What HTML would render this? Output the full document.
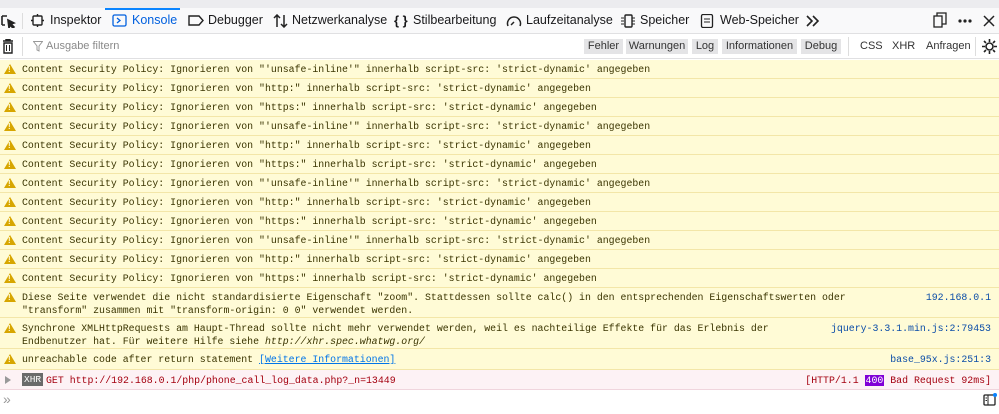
<!DOCTYPE html>
<html><head><meta charset="utf-8"><style>
*{box-sizing:border-box;margin:0;padding:0}
body{width:999px;height:414px;overflow:hidden;background:#fff;font-family:"Liberation Sans",sans-serif;position:relative}
.top{position:absolute;left:0;top:0;width:999px;height:8px;background:#ececef}
.tabs{position:absolute;left:0;top:8px;width:999px;height:26px;background:#f9f9fa;border-bottom:1px solid #e0e0e2;font-size:12.5px;color:#18181a}
.tab{position:absolute;top:0;height:25px;line-height:25px;white-space:nowrap}
.tab svg{position:absolute;left:0;top:6px}
.tab span{position:absolute;top:0}
.sel{color:#0060df}
.selbar{position:absolute;left:105px;top:0;width:75px;height:2px;background:#0a84ff}
.filter{position:absolute;left:0;top:34px;width:999px;height:25px;background:#fff;border-bottom:1px solid #e0e0e2;font-size:11px}
.btn{position:absolute;top:5px;height:15px;line-height:15px;text-align:center;background:#e4e4e6;color:#333;font-size:11px}
.plain{position:absolute;top:5px;line-height:15px;color:#333;font-size:11px}
.msg{position:absolute;left:0;width:999px;background:#fffbd6;border-bottom:1px solid #f3e6a8;font-family:"Liberation Mono",monospace;font-size:9.9px;color:#3a3400;line-height:13px}
.msg .t{position:absolute;left:22px;white-space:pre}
.msg .w{position:absolute;left:4px;width:0;height:0;border-left:6px solid transparent;border-right:6px solid transparent;border-bottom:10px solid #d7a600}
.msg .w:after{content:"!";position:absolute;left:-2px;top:1px;font:bold 8px "Liberation Sans";color:#fffbd6}
.src{position:absolute;right:8px;color:#0b4da8;white-space:pre}
a{color:#0074e8;text-decoration:underline}
</style></head><body>
<div class="top"></div>
<div class="tabs">
<div class="selbar"></div>
<div class="tab" style="left:0"><svg width="16" height="14"><path d="M2 2h5M2 2v9M2 11h3M8 6l6 3-3 1 3 3-1 1-3-3-1 3z" stroke="#222" fill="#222" stroke-width="1.6"/></svg></div>
<div style="position:absolute;left:22px;top:5px;width:1px;height:16px;background:#ddd"></div>
<div class="tab" style="left:30px"><svg width="15" height="14"><rect x="3" y="2" width="9" height="9" rx="1" fill="none" stroke="#222" stroke-width="1.4"/><path d="M1 6.5h2M12 6.5h2M7.5 0v2M7.5 11v2" stroke="#222" stroke-width="1.4"/></svg><span style="left:20px">Inspektor</span></div>
<div class="tab sel" style="left:112px"><svg width="15" height="14"><rect x="1" y="1" width="13" height="11" rx="1.5" fill="none" stroke="#0060df" stroke-width="1.3"/><path d="M5 4l3 2.5-3 2.5" fill="none" stroke="#0060df" stroke-width="1.3"/></svg><span style="left:20px">Konsole</span></div>
<div class="tab" style="left:188px"><svg width="16" height="14"><path d="M1 2h10l4 4.5-4 4.5H1z" fill="none" stroke="#222" stroke-width="1.4"/></svg><span style="left:20px">Debugger</span></div>
<div class="tab" style="left:273px"><svg width="16" height="14"><path d="M4 13V1M1 4l3-3 3 3M11 1v12M8 10l3 3 3-3" fill="none" stroke="#222" stroke-width="1.5"/></svg><span style="left:19px">Netzwerkanalyse</span></div>
<div class="tab" style="left:394px"><span style="left:0;font-weight:bold;font-size:13px">{ }</span><span style="left:19px">Stilbearbeitung</span></div>
<div class="tab" style="left:506px"><svg width="16" height="14"><path d="M2 12A6.5 6.5 0 1 1 14 12" fill="none" stroke="#222" stroke-width="1.5"/><path d="M5 11l3-3" stroke="#222" stroke-width="1.5"/></svg><span style="left:20px">Laufzeitanalyse</span></div>
<div class="tab" style="left:620px"><svg width="16" height="14"><rect x="5" y="1" width="7" height="12" rx="1" fill="none" stroke="#222" stroke-width="1.4"/><path d="M1 4h3M1 7h3M1 10h3M12 4h3M12 7h3M12 10h3" stroke="#222"/></svg><span style="left:20px">Speicher</span></div>
<div class="tab" style="left:700px"><svg width="14" height="14"><rect x="1.5" y="0.5" width="11" height="13" rx="1.5" fill="none" stroke="#222" stroke-width="1.3"/><path d="M4 5h6M4 8h6" stroke="#222"/></svg><span style="left:20px">Web-Speicher</span></div>
<div class="tab" style="left:805px"><svg width="16" height="14"><path d="M2 2l5 5-5 5M8 2l5 5-5 5" fill="none" stroke="#222" stroke-width="1.6"/></svg></div>
<div class="tab" style="left:933px"><svg width="14" height="16" style="top:4px"><rect x="1" y="4" width="8" height="11" fill="none" stroke="#222" stroke-width="1.3"/><path d="M4 4V1h9v11H9" fill="none" stroke="#222" stroke-width="1.3"/></svg></div>
<div class="tab" style="left:957px"><svg width="16" height="14"><circle cx="3" cy="7" r="1.6" fill="#222"/><circle cx="8" cy="7" r="1.6" fill="#222"/><circle cx="13" cy="7" r="1.6" fill="#222"/></svg></div>
<div class="tab" style="left:982px"><svg width="14" height="14"><path d="M2 2l10 10M12 2L2 12" stroke="#222" stroke-width="1.5"/></svg></div>
</div>
<div class="filter">
<svg style="position:absolute;left:2px;top:5px" width="12" height="15"><path d="M1 2h10M4 2V0.5h4V2M2 4h8v10H2z" fill="none" stroke="#222" stroke-width="1.4"/><path d="M4.5 6v6M7.5 6v6" stroke="#222"/></svg>
<div style="position:absolute;left:22px;top:3px;width:1px;height:19px;background:#ddd"></div>
<svg style="position:absolute;left:33px;top:7px" width="10" height="11"><path d="M0.5 0.5h9L6 5v5L4 9V5z" fill="none" stroke="#999"/></svg>
<div style="position:absolute;left:46px;top:5px;line-height:15px;color:#8a8a8a">Ausgabe filtern</div>
<div class="btn" style="left:584px;width:39px">Fehler</div>
<div class="btn" style="left:626px;width:62px">Warnungen</div>
<div class="btn" style="left:692px;width:26px">Log</div>
<div class="btn" style="left:722px;width:75px">Informationen</div>
<div class="btn" style="left:801px;width:40px">Debug</div>
<div style="position:absolute;left:848px;top:3px;width:1px;height:19px;background:#ddd"></div>
<div class="plain" style="left:860px">CSS</div>
<div class="plain" style="left:892px">XHR</div>
<div class="plain" style="left:926px">Anfragen</div>
<div style="position:absolute;left:975px;top:3px;width:1px;height:19px;background:#ddd"></div>
<svg style="position:absolute;left:982px;top:5px" width="15" height="15"><circle cx="7.5" cy="7.5" r="3.5" fill="none" stroke="#222" stroke-width="1.6"/><path d="M7.5 0v3M7.5 12v3M0 7.5h3M12 7.5h3M2 2l2 2M11 11l2 2M13 2l-2 2M2 13l2-2" stroke="#222" stroke-width="1.6"/></svg>
</div>

<div class="msg" style="top:60px;height:19px"><div class="w" style="top:4px"></div><div class="t" style="top:3px">Content Security Policy: Ignorieren von "'unsafe-inline'" innerhalb script-src: 'strict-dynamic' angegeben</div></div>
<div class="msg" style="top:79px;height:19px"><div class="w" style="top:4px"></div><div class="t" style="top:3px">Content Security Policy: Ignorieren von "http:" innerhalb script-src: 'strict-dynamic' angegeben</div></div>
<div class="msg" style="top:98px;height:19px"><div class="w" style="top:4px"></div><div class="t" style="top:3px">Content Security Policy: Ignorieren von "https:" innerhalb script-src: 'strict-dynamic' angegeben</div></div>
<div class="msg" style="top:117px;height:19px"><div class="w" style="top:4px"></div><div class="t" style="top:3px">Content Security Policy: Ignorieren von "'unsafe-inline'" innerhalb script-src: 'strict-dynamic' angegeben</div></div>
<div class="msg" style="top:136px;height:19px"><div class="w" style="top:4px"></div><div class="t" style="top:3px">Content Security Policy: Ignorieren von "http:" innerhalb script-src: 'strict-dynamic' angegeben</div></div>
<div class="msg" style="top:155px;height:19px"><div class="w" style="top:4px"></div><div class="t" style="top:3px">Content Security Policy: Ignorieren von "https:" innerhalb script-src: 'strict-dynamic' angegeben</div></div>
<div class="msg" style="top:174px;height:19px"><div class="w" style="top:4px"></div><div class="t" style="top:3px">Content Security Policy: Ignorieren von "'unsafe-inline'" innerhalb script-src: 'strict-dynamic' angegeben</div></div>
<div class="msg" style="top:193px;height:19px"><div class="w" style="top:4px"></div><div class="t" style="top:3px">Content Security Policy: Ignorieren von "http:" innerhalb script-src: 'strict-dynamic' angegeben</div></div>
<div class="msg" style="top:212px;height:19px"><div class="w" style="top:4px"></div><div class="t" style="top:3px">Content Security Policy: Ignorieren von "https:" innerhalb script-src: 'strict-dynamic' angegeben</div></div>
<div class="msg" style="top:231px;height:19px"><div class="w" style="top:4px"></div><div class="t" style="top:3px">Content Security Policy: Ignorieren von "'unsafe-inline'" innerhalb script-src: 'strict-dynamic' angegeben</div></div>
<div class="msg" style="top:250px;height:19px"><div class="w" style="top:4px"></div><div class="t" style="top:3px">Content Security Policy: Ignorieren von "http:" innerhalb script-src: 'strict-dynamic' angegeben</div></div>
<div class="msg" style="top:269px;height:19px"><div class="w" style="top:4px"></div><div class="t" style="top:3px">Content Security Policy: Ignorieren von "https:" innerhalb script-src: 'strict-dynamic' angegeben</div></div>
<div class="msg" style="top:288px;height:30px"><div class="w" style="top:4px"></div><div class="t" style="top:3px">Diese Seite verwendet die nicht standardisierte Eigenschaft "zoom". Stattdessen sollte calc() in den entsprechenden Eigenschaftswerten oder
"transform" zusammen mit "transform-origin: 0 0" verwendet werden.</div><div class="src" style="top:3px">192.168.0.1</div></div>
<div class="msg" style="top:318px;height:31px"><div class="w" style="top:5px"></div><div class="t" style="top:4px">Synchrone XMLHttpRequests am Haupt-Thread sollte nicht mehr verwendet werden, weil es nachteilige Effekte für das Erlebnis der
Endbenutzer hat. Für weitere Hilfe siehe <i>http://xhr.spec.whatwg.org/</i></div><div class="src" style="top:4px">jquery-3.3.1.min.js:2:79453</div></div>
<div class="msg" style="top:349px;height:21px"><div class="w" style="top:5px"></div><div class="t" style="top:4px">unreachable code after return statement <a>[Weitere Informationen]</a></div><div class="src" style="top:4px">base_95x.js:251:3</div></div>
<div class="msg" style="top:370px;height:20px;background:#fdf2f5;border-bottom:1px solid #f0d5dd;color:#a4000f"><svg style="position:absolute;left:5px;top:6px" width="6" height="8"><path d="M0 0l6 4-6 4z" fill="#999"/></svg><div style="position:absolute;left:22px;top:3px;height:13px;padding:0 2px;background:#6a6a6a;color:#fff;font-size:9.5px">XHR</div><div class="t" style="left:46px;top:4px">GET http://192.168.0.1/php/phone_call_log_data.php?_n=13449</div><div class="src" style="top:4px;color:#a4000f">[HTTP/1.1 <span style="background:#8000d7;color:#fff;padding:0 1px">400</span> Bad Request 92ms]</div></div>
<div style="position:absolute;left:3px;top:391px;color:#999;font-size:14px">»</div>
<svg style="position:absolute;left:983px;top:393px" width="14" height="13"><rect x="1" y="2" width="11" height="10" rx="1" fill="none" stroke="#222" stroke-width="1.3"/><path d="M5 2v10M2.5 5h1.5M2.5 7.5h1.5" stroke="#222"/><circle cx="12" cy="2" r="2" fill="#0a84ff"/></svg>
</body></html>
